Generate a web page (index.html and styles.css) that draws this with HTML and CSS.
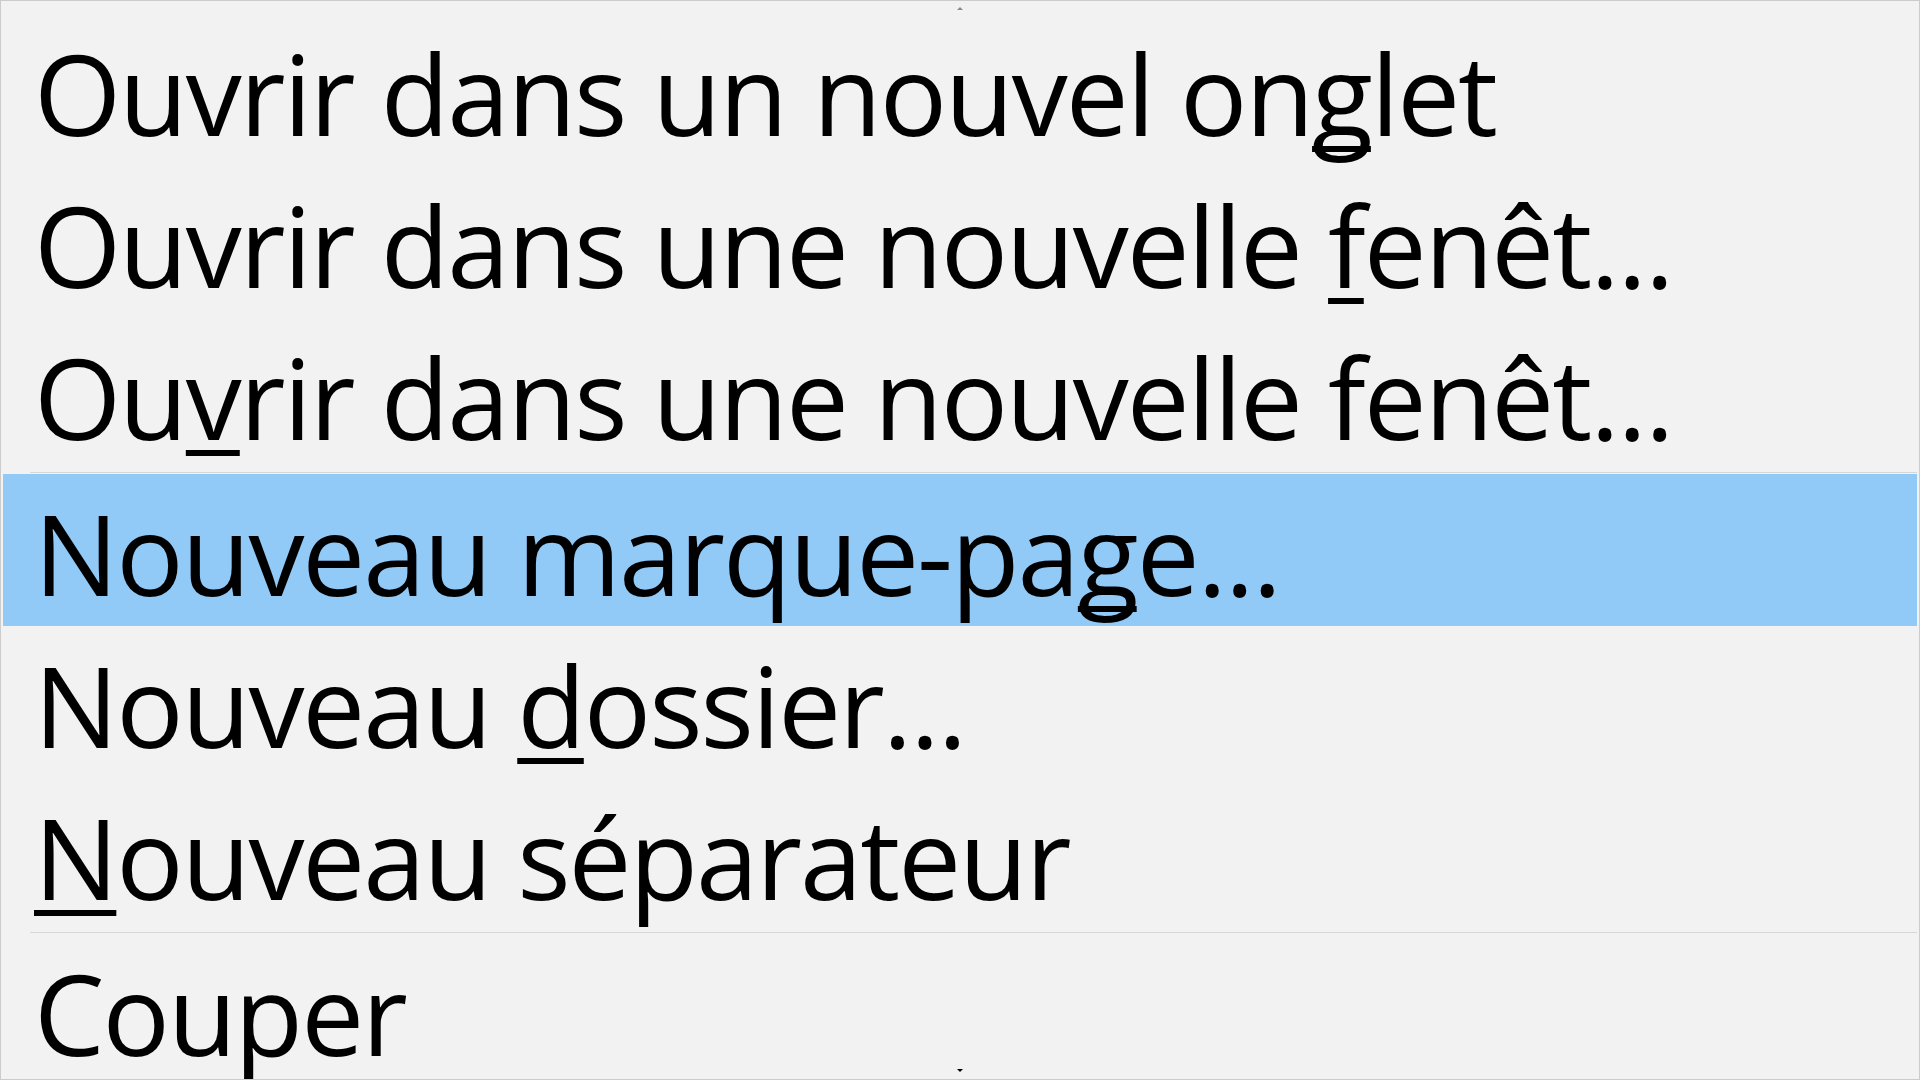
FILE: index.html
```html
<!DOCTYPE html>
<html lang="fr">
<head>
<meta charset="utf-8">
<title>Menu</title>
<link rel="stylesheet" href="styles.css">
</head>
<body>
<div class="menu">
  <div class="scroll scroll-up"><span class="arrow-up"></span></div>
  <div class="item">Ouvrir dans un nouvel on<u>g</u>let</div>
  <div class="item">Ouvrir dans une nouvelle <u>f</u>enêt...</div>
  <div class="item">Ou<u>v</u>rir dans une nouvelle fenêt...</div>
  <div class="sep"></div>
  <div class="item active">Nouveau marque-pa<u>g</u>e...</div>
  <div class="item">Nouveau <u>d</u>ossier...</div>
  <div class="item"><u>N</u>ouveau séparateur</div>
  <div class="sep"></div>
  <div class="item">Couper</div>
  <span class="arrow-down"></span>
</div>
</body>
</html>
```
FILE: styles.css
```css
html, body {
  margin: 0;
  padding: 0;
  background: #f2f2f2;
}
.menu {
  position: relative;
  box-sizing: border-box;
  width: 1920px;
  height: 1080px;
  overflow: hidden;
  border: 1px solid #cccccc;
  padding: 2px;
  background: #f2f2f2;
  font-family: "Open Sans", "Noto Sans", sans-serif;
  font-size: 112px;
  letter-spacing: -2px;
  color: #000;
}
.scroll {
  height: 11px;
  display: flex;
  justify-content: center;
  align-items: center;
}
.arrow-up {
  width: 0;
  height: 0;
  border-left: 3px solid transparent;
  border-right: 3px solid transparent;
  border-bottom: 3px solid #8a8a8a;
}
.arrow-down {
  position: absolute;
  left: 956px;
  top: 1068px;
  width: 0;
  height: 0;
  border-left: 3px solid transparent;
  border-right: 3px solid transparent;
  border-top: 3px solid #000;
}
.item {
  box-sizing: border-box;
  height: 152px;
  line-height: 146px;
  padding-top: 6px;
  padding-left: 31px;
  white-space: nowrap;
}
.item.active {
  background: #91c9f7;
}
.item u {
  text-decoration: underline;
  text-decoration-thickness: 6px;
  text-underline-offset: 10px;
  text-decoration-skip-ink: none;
}
.sep {
  height: 4px;
  display: flex;
  align-items: center;
  padding-left: 27px;
}
.sep::before {
  content: "";
  flex: 1;
  height: 1px;
  background: #d7d7d7;
}
```
